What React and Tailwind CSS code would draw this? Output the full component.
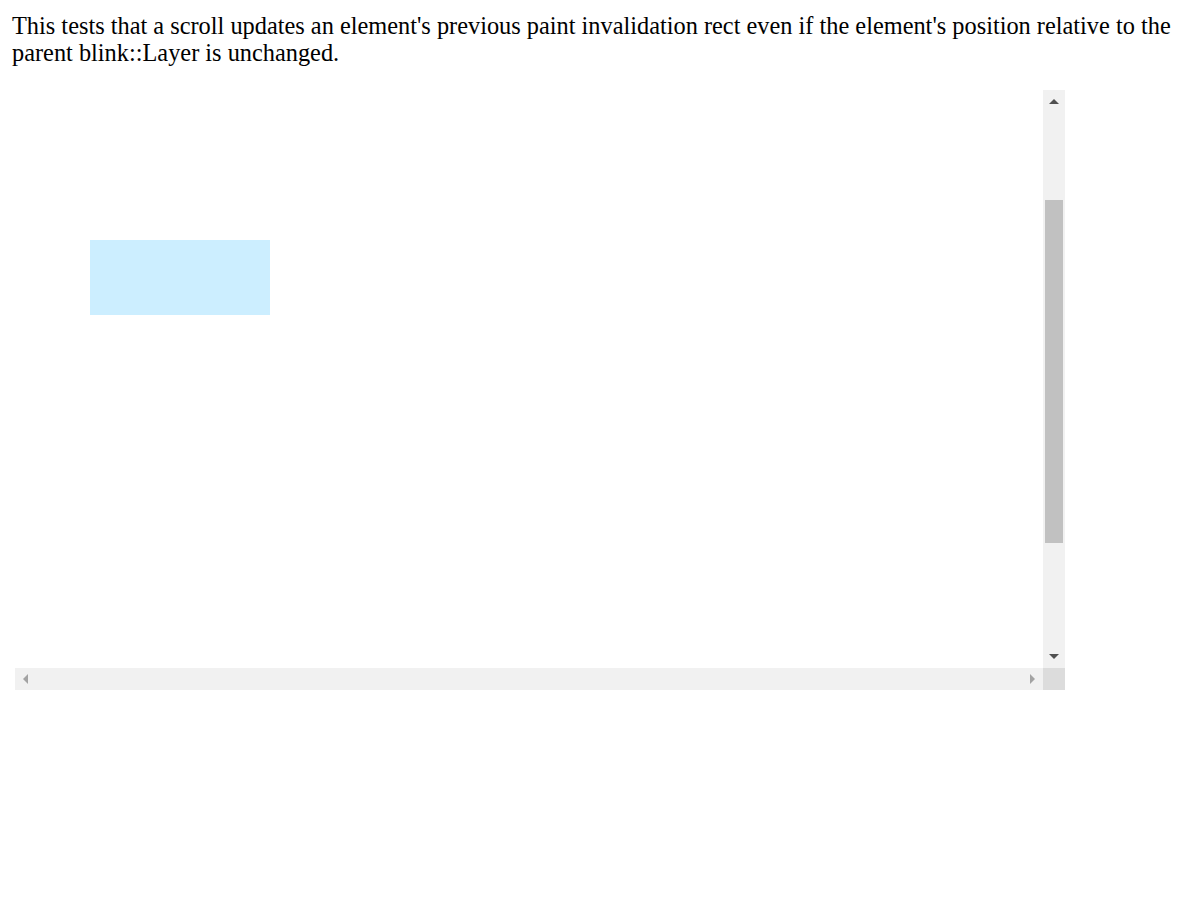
import React from "react";

function Arrow({ dir, color }) {
  const pts = {
    up: "0,5 5,0 10,5",
    down: "0,0 10,0 5,5",
    left: "5,0 5,10 0,5",
    right: "0,0 5,5 0,10",
  }[dir];
  const vertical = dir === "up" || dir === "down";
  return (
    <svg
      width={vertical ? 10 : 5}
      height={vertical ? 5 : 10}
      viewBox={vertical ? "0 0 10 5" : "0 0 5 10"}
      className="block"
    >
      <polygon points={pts} fill={color} />
    </svg>
  );
}

export default function App() {
  return (
    <div className="p-[12px] bg-white min-h-[900px] font-['Liberation_Serif',serif] text-black">
      <p className="text-[24.35px] leading-[27px] mb-[24px]">
        This tests that a scroll updates an element's previous paint invalidation rect even if the
        element's position relative to the parent blink::Layer is unchanged.
      </p>

      <div className="ml-[3px] w-[1050px] h-[600px] flex flex-col">
        <div className="flex h-[578px]">
          {/* content */}
          <div className="w-[1028px] h-[578px] bg-white overflow-hidden">
            <div className="ml-[75px] mt-[150px] w-[180px] h-[75px] bg-[#cceeff]" />
          </div>
          {/* vertical scrollbar */}
          <div className="w-[22px] h-[578px] bg-[#f1f1f1] flex flex-col items-center">
            <div className="mt-[9px]">
              <Arrow dir="up" color="#505050" />
            </div>
            <div className="mt-[96px] w-[18px] h-[343px] bg-[#c1c1c1]" />
            <div className="mt-[111px]">
              <Arrow dir="down" color="#505050" />
            </div>
          </div>
        </div>
        {/* horizontal scrollbar */}
        <div className="flex h-[22px]">
          <div className="w-[1028px] h-[22px] bg-[#f1f1f1] flex items-center justify-between pl-[8px] pr-[8px]">
            <Arrow dir="left" color="#a3a3a3" />
            <Arrow dir="right" color="#a3a3a3" />
          </div>
          <div className="w-[22px] h-[22px] bg-[#dcdcdc]" />
        </div>
      </div>
    </div>
  );
}
